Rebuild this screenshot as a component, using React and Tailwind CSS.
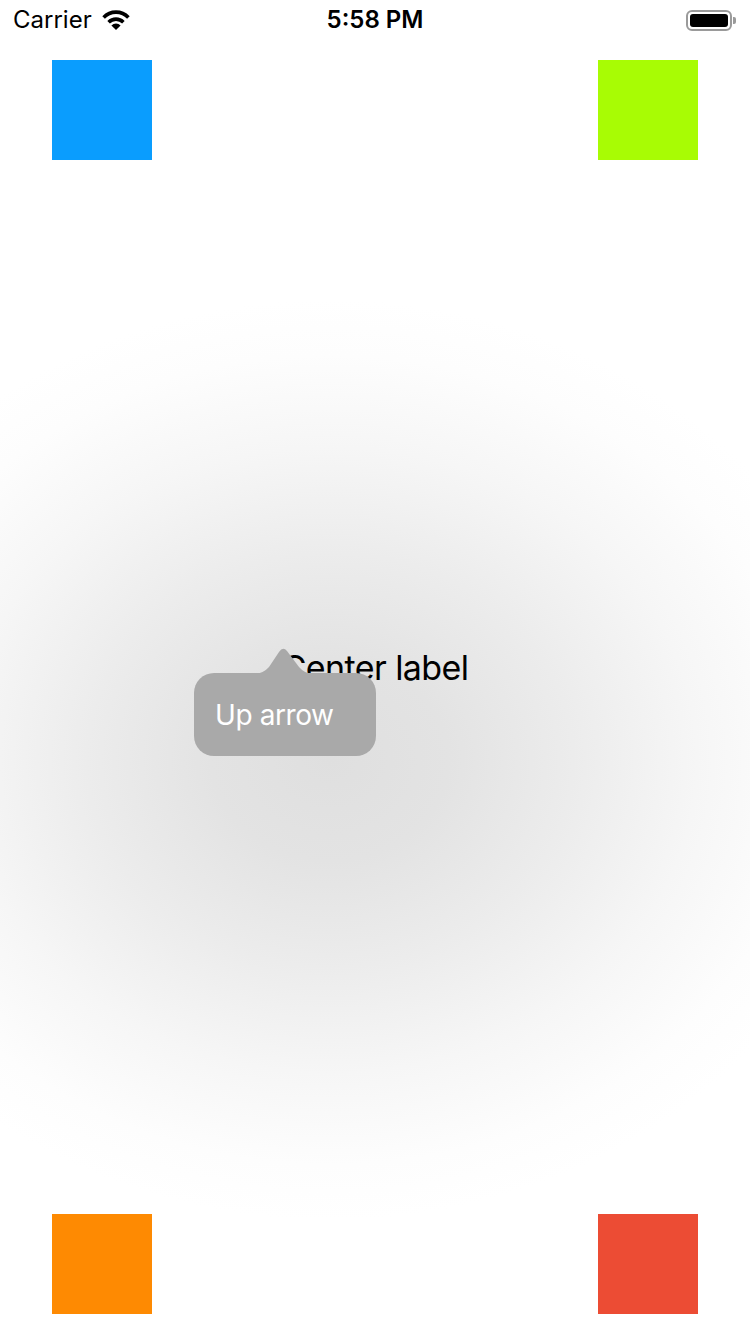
import React from "react";

function Wifi() {
  return (
    <svg width="28" height="22" viewBox="0 0 28 22" className="block">
      <path d="M14 21 L9.4 16.4 A6.5 6.5 0 0 1 18.6 16.4 Z" fill="#000" />
      <path d="M6.6 13.2 A10.5 10.5 0 0 1 21.4 13.2" fill="none" stroke="#000" strokeWidth="3.6" />
      <path d="M1.6 8.4 A17.2 17.2 0 0 1 26.4 8.4" fill="none" stroke="#000" strokeWidth="3.6" />
    </svg>
  );
}

function Battery() {
  return (
    <div className="flex items-center">
      <div className="w-[46px] h-[21px] rounded-[6px] border-2 border-[#9a9a9a] p-[2px]">
        <div className="w-full h-full rounded-[3px] bg-black" />
      </div>
      <div className="w-[3px] h-[7px] rounded-r-[2px] bg-[#9a9a9a] ml-[1px]" />
    </div>
  );
}

function StatusBar() {
  return (
    <div className="relative h-10 flex items-center justify-between pl-[13px] pr-[14px] text-[24px] text-black">
      <div className="flex items-center gap-[10px]">
        <span>Carrier</span>
        <Wifi />
      </div>
      <span className="absolute left-0 right-0 text-center font-semibold pointer-events-none">5:58 PM</span>
      <Battery />
    </div>
  );
}

function Tooltip() {
  return (
    <div className="absolute left-[194px] top-[647px] w-[182px] flex flex-col items-start">
      <svg width="60" height="27" viewBox="0 0 60 27" className="block ml-[59px] -mb-px">
        <path d="M0 27 Q10 27 16 20 L26 5 Q30 -1 34 4 L46 20 Q52 27 60 27 Z" fill="#a9a9a9" />
      </svg>
      <div className="w-full h-[83px] rounded-[20px] bg-[#a9a9a9] flex items-center pl-[21px] text-[28px] tracking-[-0.4px] text-white">
        Up arrow
      </div>
    </div>
  );
}

export default function App() {
  return (
    <div
      className="relative w-[750px] h-[1334px] overflow-hidden flex flex-col bg-[radial-gradient(ellipse_540px_460px_at_330px_760px,#dfdfdf_0%,#e3e3e3_22%,#ececec_45%,#f6f6f6_68%,#fdfdfd_88%,#ffffff_100%)]"
      style={{ fontFamily: "Inter, 'Noto Sans', sans-serif" }}
    >
      <StatusBar />
      <div className="mt-5 flex justify-between px-[52px]">
        <div className="w-[100px] h-[100px] bg-[#0a9dfe]" />
        <div className="w-[100px] h-[100px] bg-[#a8fc04]" />
      </div>
      <div className="flex-1 flex items-center justify-center pb-10">
        <span className="text-[34px] text-black tracking-[-0.6px]">Center label</span>
      </div>
      <div className="mb-5 flex justify-between px-[52px]">
        <div className="w-[100px] h-[100px] bg-[#fe8a02]" />
        <div className="w-[100px] h-[100px] bg-[#ec4c34]" />
      </div>
      <Tooltip />
    </div>
  );
}
